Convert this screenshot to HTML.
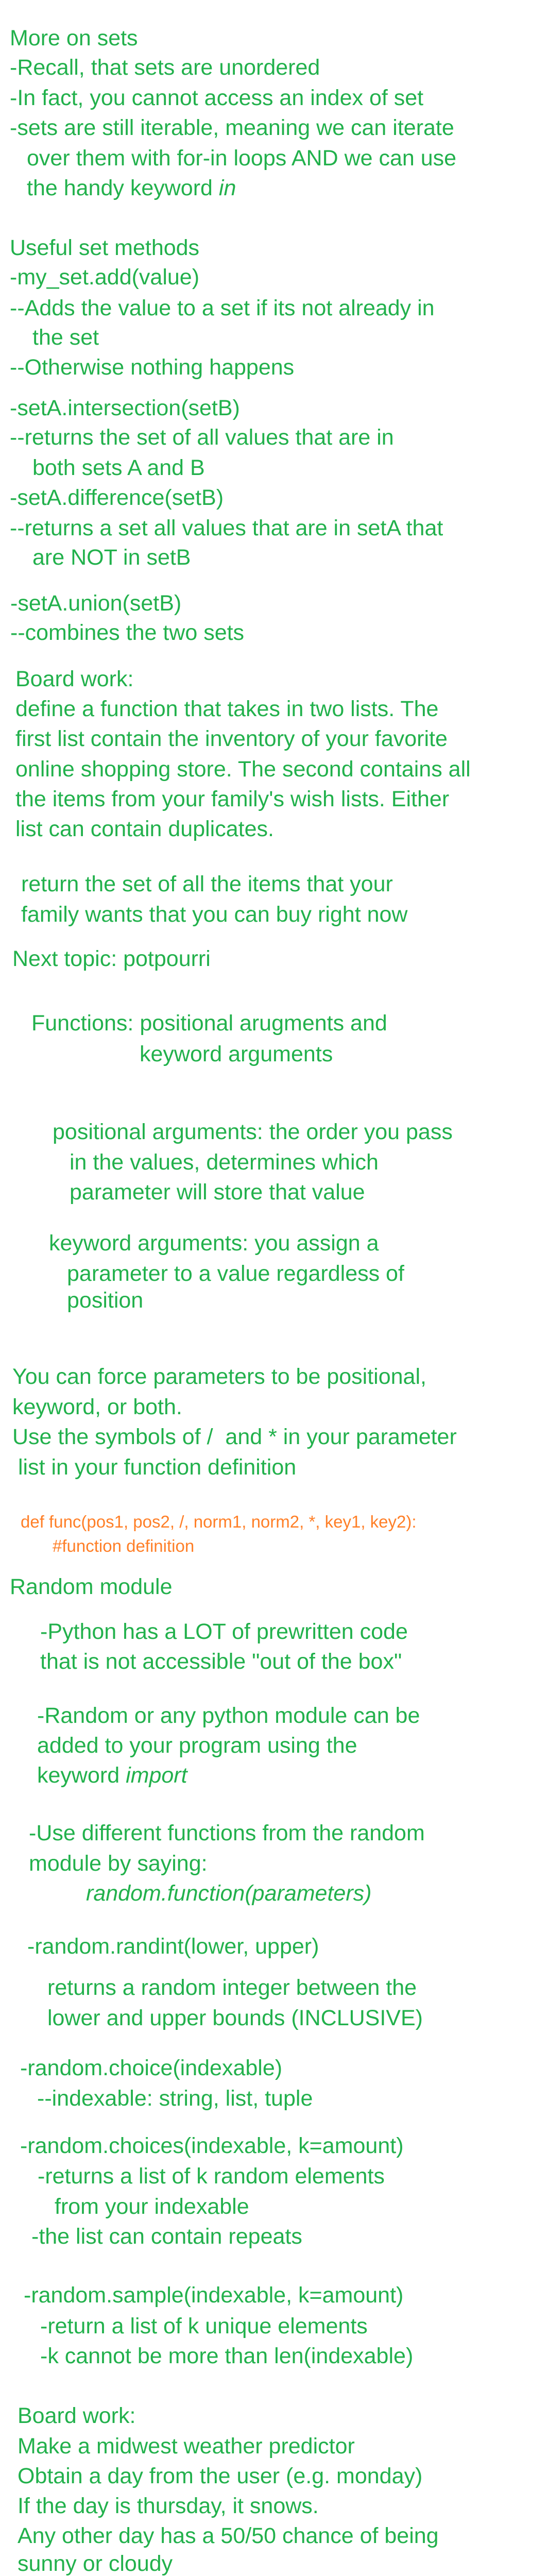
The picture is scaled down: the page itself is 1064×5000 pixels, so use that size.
<!DOCTYPE html>
<html><head><meta charset="utf-8"><style>
html,body{margin:0;padding:0;background:#fff;}
body{width:1064px;height:5000px;position:relative;overflow:hidden;font-family:"Liberation Sans",sans-serif;}
.l{position:absolute;white-space:pre;font-size:43px;line-height:52px;height:52px;margin-top:3px;color:#22b14c;}
.o{position:absolute;white-space:pre;font-size:33px;line-height:40px;color:#ff7f27;}
</style></head><body>
<div class="l" style="left:19px;top:45px">More on sets</div>
<div class="l" style="left:19px;top:102px">-Recall, that sets are unordered</div>
<div class="l" style="left:19px;top:161px">-In fact, you cannot access an index of set</div>
<div class="l" style="left:19px;top:219px">-sets are still iterable, meaning we can iterate</div>
<div class="l" style="left:52px;top:278px">over them with for-in loops AND we can use</div>
<div class="l" style="left:52px;top:336px">the handy keyword <i>in</i></div>
<div class="l" style="left:19px;top:452px">Useful set methods</div>
<div class="l" style="left:19px;top:509px">-my_set.add(value)</div>
<div class="l" style="left:19px;top:569px">--Adds the value to a set if its not already in</div>
<div class="l" style="left:63px;top:626px">the set</div>
<div class="l" style="left:19px;top:684px">--Otherwise nothing happens</div>
<div class="l" style="left:19px;top:763px">-setA.intersection(setB)</div>
<div class="l" style="left:19px;top:820px">--returns the set of all values that are in</div>
<div class="l" style="left:63px;top:879px">both sets A and B</div>
<div class="l" style="left:19px;top:937px">-setA.difference(setB)</div>
<div class="l" style="left:19px;top:996px">--returns a set all values that are in setA that</div>
<div class="l" style="left:63px;top:1053px">are NOT in setB</div>
<div class="l" style="left:20px;top:1142px">-setA.union(setB)</div>
<div class="l" style="left:20px;top:1199px">--combines the two sets</div>

<div class="l" style="left:30px;top:1289px">Board work:</div>
<div class="l" style="left:30px;top:1347px">define a function that takes in two lists. The</div>
<div class="l" style="left:30px;top:1405px">first list contain the inventory of your favorite</div>
<div class="l" style="left:30px;top:1464px">online shopping store. The second contains all</div>
<div class="l" style="left:30px;top:1522px">the items from your family's wish lists. Either</div>
<div class="l" style="left:30px;top:1580px">list can contain duplicates.</div>
<div class="l" style="left:41px;top:1687px">return the set of all the items that your</div>
<div class="l" style="left:41px;top:1746px">family wants that you can buy right now</div>
<div class="l" style="left:24px;top:1832px">Next topic: potpourri</div>
<div class="l" style="left:61px;top:1957px">Functions: positional arugments and</div>
<div class="l" style="left:271px;top:2017px">keyword arguments</div>
<div class="l" style="left:102px;top:2168px">positional arguments: the order you pass</div>
<div class="l" style="left:135px;top:2227px">in the values, determines which</div>
<div class="l" style="left:135px;top:2285px">parameter will store that value</div>
<div class="l" style="left:95px;top:2384px">keyword arguments: you assign a</div>
<div class="l" style="left:130px;top:2443px">parameter to a value regardless of</div>
<div class="l" style="left:130px;top:2495px">position</div>

<div class="l" style="left:24px;top:2643px">You can force parameters to be positional,</div>
<div class="l" style="left:24px;top:2702px">keyword, or both.</div>
<div class="l" style="left:24px;top:2760px">Use the symbols of /  and * in your parameter</div>
<div class="l" style="left:35px;top:2819px">list in your function definition</div>
<div class="o" style="left:40px;top:2934px">def func(pos1, pos2, /, norm1, norm2, *, key1, key2):</div>
<div class="o" style="left:102px;top:2981px">#function definition</div>
<div class="l" style="left:19px;top:3051px">Random module</div>
<div class="l" style="left:78px;top:3138px">-Python has a LOT of prewritten code</div>
<div class="l" style="left:78px;top:3196px">that is not accessible "out of the box"</div>
<div class="l" style="left:72px;top:3301px">-Random or any python module can be</div>
<div class="l" style="left:72px;top:3359px">added to your program using the</div>
<div class="l" style="left:72px;top:3417px">keyword <i>import</i></div>
<div class="l" style="left:56px;top:3529px">-Use different functions from the random</div>
<div class="l" style="left:56px;top:3588px">module by saying:</div>
<div class="l" style="left:167px;top:3646px"><i>random.function(parameters)</i></div>

<div class="l" style="left:53px;top:3749px">-random.randint(lower, upper)</div>
<div class="l" style="left:92px;top:3829px">returns a random integer between the</div>
<div class="l" style="left:92px;top:3888px">lower and upper bounds (INCLUSIVE)</div>
<div class="l" style="left:39px;top:3985px">-random.choice(indexable)</div>
<div class="l" style="left:72px;top:4044px">--indexable: string, list, tuple</div>
<div class="l" style="left:39px;top:4136px">-random.choices(indexable, k=amount)</div>
<div class="l" style="left:73px;top:4195px">-returns a list of k random elements</div>
<div class="l" style="left:106px;top:4254px">from your indexable</div>
<div class="l" style="left:61px;top:4312px">-the list can contain repeats</div>
<div class="l" style="left:46px;top:4426px">-random.sample(indexable, k=amount)</div>
<div class="l" style="left:78px;top:4486px">-return a list of k unique elements</div>
<div class="l" style="left:78px;top:4544px">-k cannot be more than len(indexable)</div>
<div class="l" style="left:34px;top:4660px">Board work:</div>
<div class="l" style="left:34px;top:4719px">Make a midwest weather predictor</div>
<div class="l" style="left:34px;top:4777px">Obtain a day from the user (e.g. monday)</div>
<div class="l" style="left:34px;top:4835px">If the day is thursday, it snows.</div>
<div class="l" style="left:34px;top:4893px">Any other day has a 50/50 chance of being</div>
<div class="l" style="left:34px;top:4950px;height:46px;line-height:46px">sunny or cloudy</div>
</body></html>
